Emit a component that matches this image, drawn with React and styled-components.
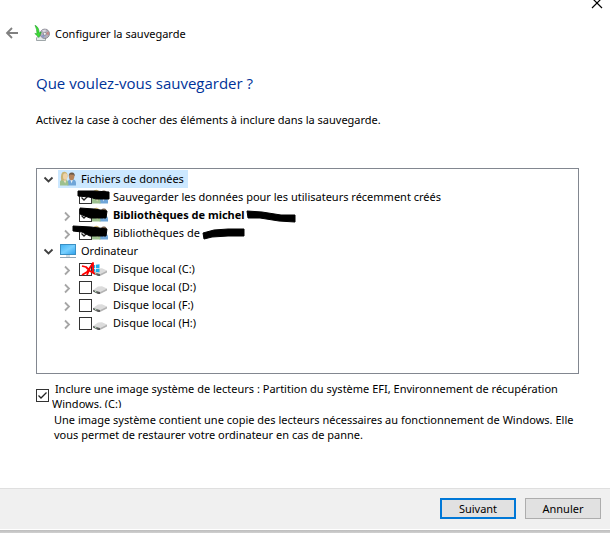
import { useState } from "react";
import styled, { createGlobalStyle } from "styled-components";

const GlobalStyle = createGlobalStyle`
    * {
        box-sizing: border-box;
    }

    body {
        margin: 0;
        background: #ffffff;
    }

    body,
    button,
    input {
        font-family: "Noto Sans", "Open Sans", sans-serif;
        font-size: 11px;
        line-height: 15px;
        color: #000000;
    }
`;

const Window = styled.div`
    display: flex;
    flex-direction: column;
    width: 100%;
    height: 100vh;
    overflow: hidden;
    background: #ffffff;
`;

const TitleBar = styled.div`
    display: flex;
    justify-content: flex-end;
    height: 22px;
    padding-right: 7px;
`;

const IconButton = styled.button`
    display: flex;
    align-items: ${(props) => (props.$top ? "flex-start" : "center")};
    justify-content: center;
    padding: 0;
    border: 0;
    background: none;
`;

const Header = styled.header`
    display: flex;
    align-items: center;
    height: 22px;
    padding-left: 5px;
`;

const HeaderIcon = styled.svg`
    margin: 0 5px 0 14px;
`;

const Main = styled.main`
    flex: 1;
    padding: 27px 31px 0 36px;
`;

const Heading = styled.h1`
    margin: 0;
    font-family: "Open Sans", "Noto Sans", sans-serif;
    font-size: 15px;
    font-weight: 400;
    line-height: 24px;
    color: #003399;
`;

const Instruction = styled.p`
    margin: 17px 0 41px;
`;

const Tree = styled.ul`
    height: 206px;
    margin: 0;
    padding: 1px 0 0 6px;
    border: 1px solid #828790;
    line-height: 14px;
    list-style: none;
`;

const Branch = styled.ul`
    margin: 0;
    padding: 0 0 0 19px;
    list-style: none;
`;

const Row = styled.div`
    position: relative;
    display: flex;
    align-items: center;
    height: 18px;
`;

const Toggle = styled.button`
    display: flex;
    align-items: center;
    justify-content: center;
    width: 11px;
    height: 18px;
    margin-right: ${(props) => (props.$nested ? "6px" : "4px")};
    padding: 0;
    border: 0;
    background: none;
    visibility: ${(props) => (props.$hidden ? "hidden" : "visible")};
`;

const GroupLabel = styled.span`
    display: flex;
    align-items: center;
    gap: 5px;
    height: 18px;
    padding: 0 4px 0 2px;
    background: ${(props) => (props.$selected ? "#cce8ff" : "none")};
`;

const ItemLabel = styled.label`
    display: flex;
    align-items: center;
    gap: 5px;
    font-weight: ${(props) => (props.$bold ? 700 : 400)};
    white-space: nowrap;
`;

const CheckWrap = styled.span`
    position: relative;
    display: flex;
    flex: none;
`;

const CheckInput = styled.input`
    appearance: none;
    width: 13px;
    height: 13px;
    margin: 0;
    border: 1px solid #333333;
    background: #ffffff;
`;

const CheckMark = styled.svg`
    position: absolute;
    top: 0;
    left: 0;
    pointer-events: none;
`;

const Scribble = styled.svg`
    position: absolute;
    top: -4px;
    left: 0;
    overflow: visible;
    pointer-events: none;
`;

const ImageOption = styled.div`
    display: flex;
    align-items: center;
    gap: 3px;
    height: 28px;
    margin-top: 7px;
`;

const ImageLabel = styled.label`
    align-self: flex-start;
    height: 27px;
    overflow: hidden;
    white-space: pre-wrap;
`;

const Description = styled.p`
    margin: 3px -12px 0 18px;
`;

const Footer = styled.footer`
    display: flex;
    justify-content: flex-end;
    gap: 9px;
    height: 41px;
    padding: 9px 9px 0 0;
    border-top: 1px solid #dfdfdf;
    background: #f0f0f0;
`;

const WindowEdge = styled.div`
    height: 4px;
    border-top: 1px solid #ffffff;
    background: linear-gradient(#bdbdbd, #d0d0d0);
`;

const Button = styled.button`
    width: 76px;
    height: 21px;
    padding: 0;
    border: ${(props) => (props.$primary ? "2px solid #0078d7" : "1px solid #adadad")};
    background: #e1e1e1;
`;

function Chevron({ open }) {
    return open ? (
        <svg width="11" height="8" viewBox="0 0 11 8">
            <path d="M1.5 2.5 L5.5 6.5 L9.5 2.5" fill="none" stroke="#404040" strokeWidth="1.8" />
        </svg>
    ) : (
        <svg width="9" height="13" viewBox="0 0 9 13">
            <path d="M2 3.5 L6 7.5 L2 11.5" fill="none" stroke="#a6a6a6" strokeWidth="1.8" />
        </svg>
    );
}

function UsersIcon() {
    return (
        <svg width="16" height="16" viewBox="0 0 16 16">
            <path d="M7.5 14.5 V11 Q8.5 8 11.5 8 Q15.5 8 16 11.5 V14.5 Z" fill="#6fa5d8" />
            <path d="M10.2 8 L11.5 12.5 L13.2 8 Z" fill="#e6f0f8" />
            <ellipse cx="11.6" cy="5.6" rx="2.7" ry="3.6" fill="#b5835a" />
            <path d="M8.8 5 Q8.6 1.3 12 1.5 Q15.2 1.8 14.7 5.5 L13.6 3.8 L10 3.4 Z" fill="#6d5947" />
            <path d="M0 14.5 V10.5 Q0.5 8.5 3.5 8.5 L6.5 8.8 Q8.5 10 8.5 14.5 Z" fill="#9cc08e" />
            <path d="M3 8.5 L5.2 12.5 L6.5 8.5 Z" fill="#f2e4c4" />
            <path d="M1.2 9.5 Q0 0.5 4.5 0.8 Q8.2 1 7.4 6 L6 9.5 Z" fill="#c9b474" />
            <ellipse cx="5.2" cy="5.5" rx="2.2" ry="3.3" fill="#efd2a6" />
        </svg>
    );
}

function ComputerIcon() {
    return (
        <svg width="16" height="16" viewBox="0 0 16 16">
            <defs>
                <linearGradient id="screen" x1="0" y1="0" x2="1" y2="1">
                    <stop offset="0" stopColor="#3fb1f3" />
                    <stop offset="0.5" stopColor="#78d0ff" />
                    <stop offset="1" stopColor="#2ca0ec" />
                </linearGradient>
            </defs>
            <rect x="0.5" y="1.5" width="15" height="10" fill="url(#screen)" stroke="#3a8fc4" />
            <path d="M6 12 H10 V14 H6 Z" fill="#d3dde3" />
            <path d="M0 14.5 H16" stroke="#91a5b4" />
        </svg>
    );
}

function DriveIcon({ system }) {
    return (
        <svg width="16" height="16" viewBox="0 0 16 16">
            <path d="M1 11 L6 7.5 L10 7.2 L15 9.5 L8 13 Z" fill="#dcdcdc" />
            <path d="M1 11 L8 13 V15 L6 15 L1 12.5 Z" fill="#5c5c5c" />
            <path d="M8 13 L15 9.5 V11.5 L8 15 Z" fill="#b4b4b4" />
            <path d="M3 12.3 L4.5 12.8" stroke="#b5e5ba" />
            {system ? (
                <path
                    d="M0 4.3 L3 3.9 V7 H0 Z M3.8 3.8 L7.5 3.3 V7 H3.8 Z M0 7.8 H3 V10.8 L0 10.4 Z M3.8 7.8 H7.5 V11.3 L3.8 10.9 Z"
                    fill="#22aee9"
                />
            ) : null}
        </svg>
    );
}

function BackupIcon() {
    return (
        <HeaderIcon width="16" height="16" viewBox="0 0 16 16">
            <path d="M2.5 13 L4.5 10.5 H10 L11.5 13 V15.5 H2.5 Z" fill="#e4e9eb" stroke="#8a9396" strokeWidth="0.8" />
            <circle cx="10.8" cy="8.8" r="4.7" fill="#b3b1bb" stroke="#7b7c86" strokeWidth="0.8" />
            <path d="M10.8 8.8 L8 5 L12 4.5 Z" fill="#ded9e4" />
            <path d="M10.8 8.8 L14.6 6.5 L15 10 Z" fill="#c98583" />
            <path d="M10.8 8.8 L7 11 L10 13 Z" fill="#8d97cc" />
            <circle cx="10.8" cy="8.8" r="1.5" fill="#f5f5f5" stroke="#777985" strokeWidth="0.7" />
            <path
                d="M1 0.3 Q5 2 5.2 8 L7.2 7 L5 12.5 L0.8 8.5 L3 8.8 Q3 4 1 0.3 Z"
                fill="#3fdc36"
                stroke="#22a52a"
                strokeWidth="0.6"
            />
        </HeaderIcon>
    );
}

function Checkbox({ id, checked, onChange }) {
    return (
        <CheckWrap>
            <CheckInput type="checkbox" id={id} checked={checked} onChange={onChange} />
            {checked ? (
                <CheckMark width="13" height="13" viewBox="0 0 13 13">
                    <path d="M2.5 6.5 L5 9 L10.5 3.5" fill="none" stroke="#222222" strokeWidth="1.3" />
                </CheckMark>
            ) : null}
        </CheckWrap>
    );
}

// Marker strokes drawn over a row, in the row's own coordinates
const files = [
    {
        id: "new-users",
        label: "Sauvegarder les données pour les utilisateurs récemment créés",
        leaf: true,
        marks: ["M16 7 L32 7 L47 8 L47 15 L34 15 L27 13 L16 12 Z"],
    },
    {
        id: "library-1",
        label: "Bibliothèques de michel",
        bold: true,
        marks: [
            "M18 6 L32 7 L45 9 L44 16 L28 16 L18 12 Z",
            "M185 9 L200 10 L219 13 L233 13 L233 20 L217 19 L198 16 L186 16 Z",
        ],
    },
    {
        id: "library-2",
        label: "Bibliothèques de",
        marks: [
            "M11 6 L29 7 L45 9 L44 16 L28 16 L20 12 L11 11 Z",
            "M141 13 L152 10 L166 9 L182 9 L182 16 L166 16 L150 17 L142 19 Z",
        ],
    },
];

const drives = ["C", "D", "F", "H"];

function App() {
    const [open, setOpen] = useState({ files: true, computer: true });
    const [checked, setChecked] = useState({
        "new-users": true,
        "library-1": true,
        "library-2": true,
        image: true,
    });

    const toggleOpen = (key) => setOpen((prev) => ({ ...prev, [key]: !prev[key] }));
    const toggleCheck = (key) => setChecked((prev) => ({ ...prev, [key]: !prev[key] }));

    return (
        <Window>
            <GlobalStyle />
            <TitleBar>
                <IconButton $top aria-label="Fermer">
                    <svg width="12" height="9" viewBox="0 0 12 9">
                        <path d="M1 -2 L11 8 M11 -2 L1 8" stroke="#000000" strokeWidth="1.2" />
                    </svg>
                </IconButton>
            </TitleBar>
            <Header>
                <IconButton aria-label="Retour">
                    <svg width="15" height="14" viewBox="0 0 15 14">
                        <path
                            d="M13 7 H2 M7 2 L2 7 L7 12"
                            fill="none"
                            stroke="#808080"
                            strokeWidth="1.8"
                        />
                    </svg>
                </IconButton>
                <BackupIcon />
                <span>Configurer la sauvegarde</span>
            </Header>
            <Main>
                <Heading>Que voulez-vous sauvegarder ?</Heading>
                <Instruction>
                    Activez la case à cocher des éléments à inclure dans la sauvegarde.
                </Instruction>
                <Tree>
                    <li>
                        <Row>
                            <Toggle aria-label="Fichiers" onClick={() => toggleOpen("files")}>
                                <Chevron open={open.files} />
                            </Toggle>
                            <GroupLabel $selected>
                                <UsersIcon />
                                Fichiers de données
                            </GroupLabel>
                        </Row>
                        {open.files ? (
                            <Branch>
                                {files.map((item) => (
                                    <li key={item.id}>
                                        <Row>
                                            <Toggle $nested $hidden={item.leaf} aria-label={item.label}>
                                                <Chevron />
                                            </Toggle>
                                            <Checkbox
                                                id={item.id}
                                                checked={checked[item.id]}
                                                onChange={() => toggleCheck(item.id)}
                                            />
                                            <ItemLabel htmlFor={item.id} $bold={item.bold}>
                                                <UsersIcon />
                                                {item.label}
                                            </ItemLabel>
                                            <Scribble width="240" height="22">
                                                {item.marks.map((d) => (
                                                    <path
                                                        key={d}
                                                        d={d}
                                                        stroke="#000000"
                                                        strokeLinejoin="round"
                                                    />
                                                ))}
                                            </Scribble>
                                        </Row>
                                    </li>
                                ))}
                            </Branch>
                        ) : null}
                    </li>
                    <li>
                        <Row>
                            <Toggle aria-label="Ordinateur" onClick={() => toggleOpen("computer")}>
                                <Chevron open={open.computer} />
                            </Toggle>
                            <GroupLabel>
                                <ComputerIcon />
                                Ordinateur
                            </GroupLabel>
                        </Row>
                        {open.computer ? (
                            <Branch>
                                {drives.map((letter) => (
                                    <li key={letter}>
                                        <Row>
                                            <Toggle $nested aria-label={`Disque ${letter}`}>
                                                <Chevron />
                                            </Toggle>
                                            <Checkbox
                                                id={letter}
                                                checked={!!checked[letter]}
                                                onChange={() => toggleCheck(letter)}
                                            />
                                            <ItemLabel htmlFor={letter}>
                                                <DriveIcon system={letter === "C"} />
                                                {`Disque local (${letter}:)`}
                                            </ItemLabel>
                                            {letter === "C" ? (
                                                <Scribble width="40" height="22">
                                                    <path
                                                        d="M20 10 L24 11 L28 15 L33 18 M20 19 L25 16 L31 7 L31 17 M28 12 L25 19"
                                                        fill="none"
                                                        stroke="#ff0000"
                                                        strokeWidth="1.8"
                                                        strokeLinejoin="round"
                                                    />
                                                </Scribble>
                                            ) : null}
                                        </Row>
                                    </li>
                                ))}
                            </Branch>
                        ) : null}
                    </li>
                </Tree>
                <ImageOption>
                    <Checkbox id="image" checked={checked.image} onChange={() => toggleCheck("image")} />
                    <ImageLabel htmlFor="image">
                        {" Inclure une image système de lecteurs : Partition du système EFI, Environnement de récupération Windows. (C:)"}
                    </ImageLabel>
                </ImageOption>
                <Description>
                    Une image système contient une copie des lecteurs nécessaires au fonctionnement de
                    Windows. Elle vous permet de restaurer votre ordinateur en cas de panne.
                </Description>
            </Main>
            <Footer>
                <Button $primary>Suivant</Button>
                <Button>Annuler</Button>
            </Footer>
            <WindowEdge />
        </Window>
    );
}

export default App;
